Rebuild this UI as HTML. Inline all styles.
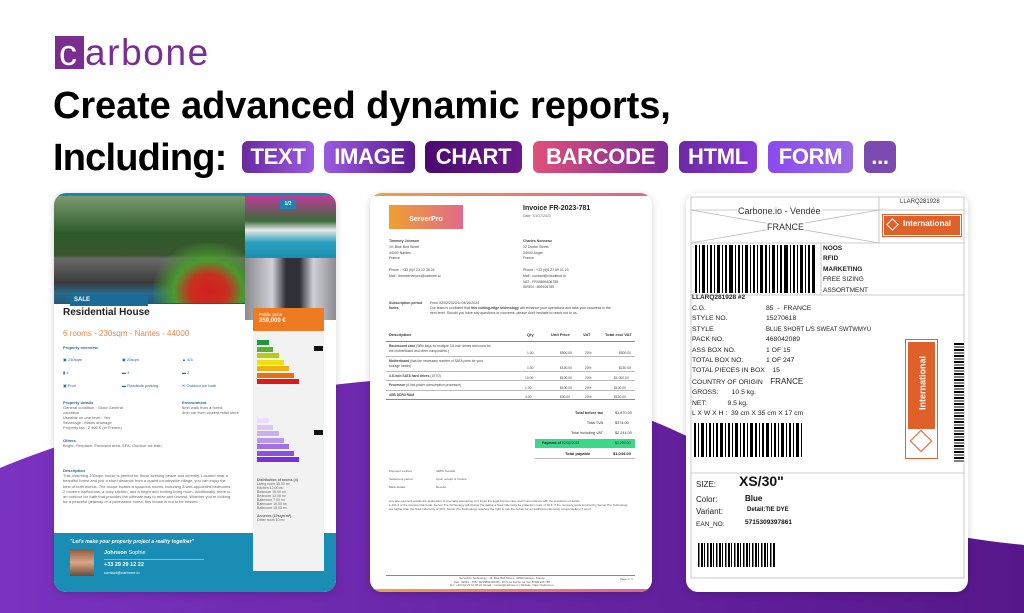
<!DOCTYPE html>
<html><head><meta charset="utf-8"><style>
*{margin:0;padding:0;box-sizing:border-box}
body{width:1024px;height:613px;overflow:hidden;background:#fff;font-family:"Liberation Sans",sans-serif;position:relative}
.a{position:absolute}
.badge{position:absolute;top:141px;height:32px;border-radius:6px;color:#fff;font-weight:bold;font-size:22px;line-height:32px;text-align:center;letter-spacing:-0.3px}
.card{position:absolute;top:193px;width:282px;height:399px;border-radius:12px;background:#fff;overflow:hidden;box-shadow:0 2px 8px rgba(0,0,0,.18)}
.t{position:absolute;white-space:nowrap;color:#333}
.ln{position:absolute;background:#bbb;height:1px}
</style></head><body>
<svg class="a" style="left:0;top:0" width="1024" height="613">
<defs><linearGradient id="pg" x1="0" x2="1" y1="0" y2="0"><stop offset="0" stop-color="#7a32c0"/><stop offset="1" stop-color="#56178a"/></linearGradient></defs>
<path d="M0,468 C90,430 230,395 360,382 C460,372 560,385 650,420 C740,455 820,525 1024,545 L1024,613 L0,613Z" fill="url(#pg)"/>
</svg>
<!-- logo -->
<div class="a" style="left:55px;top:36px;width:29px;height:33px;background:#7b2d90"></div>
<div class="a" style="left:59px;top:33px;font-size:36px;color:#fff;line-height:40px">c</div>
<div class="a" style="left:85px;top:33px;font-size:37px;color:#7b2d90;line-height:40px;letter-spacing:1.6px">arbone</div>
<div class="a" style="left:53px;top:84px;font-size:38px;font-weight:bold;letter-spacing:-0.1px;color:#000;line-height:44px">Create advanced dynamic reports,</div>
<div class="a" style="left:53px;top:136px;font-size:38px;font-weight:bold;letter-spacing:-0.8px;color:#000;line-height:44px">Including:</div>
<div class="badge" style="left:242px;width:72px;background:linear-gradient(90deg,#6a2aa0,#9b5ae0)">TEXT</div>
<div class="badge" style="left:324px;width:91px;background:linear-gradient(90deg,#9a5ae0,#5a1a90)">IMAGE</div>
<div class="badge" style="left:425px;width:97px;background:linear-gradient(90deg,#4a0a70,#6a1a8a)">CHART</div>
<div class="badge" style="left:533px;width:135px;background:linear-gradient(90deg,#e0507a,#7a2a9a)">BARCODE</div>
<div class="badge" style="left:679px;width:78px;background:linear-gradient(90deg,#6a2aa0,#8a3ad8)">HTML</div>
<div class="badge" style="left:768px;width:85px;background:linear-gradient(90deg,#8a4af0,#9b6ae0)">FORM</div>
<div class="badge" style="left:864px;width:32px;background:#7a4ab0">...</div>

<!-- card 1 -->
<div class="card" style="left:54px">
 <div class="a" style="left:0;top:0;width:282px;height:3px;background:#1a86b0"></div>
 <div class="a" style="left:0;top:3px;width:191px;height:108px;background:linear-gradient(180deg,#7a9a70 0%,#2e5a2a 35%,#3a5530 55%,#6a6a6a 58%,#3a3a3a 80%,#2a6a8a 90%,#1f5a7a 100%)"></div>
 <div class="a" style="left:100px;top:50px;width:91px;height:60px;background:radial-gradient(ellipse at 60% 80%,#d02020 0,#c83020 25%,#4a9a30 45%,rgba(60,140,40,0) 75%)"></div>
 <div class="a" style="left:191px;top:3px;width:91px;height:62px;background:linear-gradient(180deg,#c03a9a 0,#3a6a3a 40%,#e8e8e8 55%,#2aa0c0 75%,#1a90b0 100%)"></div>
 <div class="a" style="left:191px;top:65px;width:91px;height:62px;background:linear-gradient(90deg,#8a8a90,#d0d0d8 30%,#303038 45%,#303038 60%,#d0d0d8 75%,#8a8a90)"></div>
 <div class="a" style="left:226px;top:6px;width:16px;height:10px;background:#1a86b0;color:#fff;font-size:5px;font-weight:bold;text-align:center;line-height:10px">1/2</div>
 <div class="a" style="left:16px;top:101px;width:78px;height:12px;background:#1a6a9a;color:#fff;font-size:6px;font-weight:bold;line-height:12px;padding-left:4px">SALE</div>
 <div class="a" style="left:0;top:113px;width:157px;height:15px;background:#fff"></div>
 <div class="t" style="left:9px;top:114px;font-size:10px;font-weight:bold;color:#222">Residential House</div>
 <div class="t" style="left:9px;top:136px;font-size:8px;color:#e8884a">6 rooms - 230sqm - Nantes - 44000</div>
 <div class="t" style="left:9px;top:152px;font-size:4px;color:#1a6a9a;font-weight:bold">Property overview</div>
 <div class="t" style="left:9px;top:160px;font-size:4px;line-height:13px;color:#1a6a9a">▣ 230sqm<br>▮ 4<br>▣ Pool</div>
 <div class="t" style="left:68px;top:160px;font-size:4px;line-height:13px;color:#1a6a9a">▣ 20sqm<br>▬ 3<br>▬ Roadside parking</div>
 <div class="t" style="left:128px;top:160px;font-size:4px;line-height:13px;color:#1a6a9a">▲ 4/3<br>▬ 2<br>✕ Outdoor ice bath</div>
 <div class="t" style="left:9px;top:207px;font-size:4px;line-height:5px;color:#666"><b style="color:#1a6a9a">Property details</b><br>General condition : Good General<br>condition<br>Useable on one level : Yes<br>Sewerage : Mains drainage<br>Property tax : 2 500 € (in French)</div>
 <div class="t" style="left:128px;top:207px;font-size:4px;line-height:5px;color:#666"><b style="color:#1a6a9a">Environment</b><br>5mn walk from a forest<br>5mn car from closest retail store</div>
 <div class="t" style="left:9px;top:245px;font-size:4px;line-height:5px;color:#666"><b style="color:#1a6a9a">Others</b><br>Bright, Fireplace, Enclosed area, SPA, Outdoor ice bath</div>
 <div class="t" style="left:9px;top:275px;font-size:4px;line-height:5.2px;color:#666;white-space:normal;width:170px"><b style="color:#1a6a9a">Description</b><br>This charming 230sqm house is perfect for those seeking peace and serenity. Located near a beautiful forest and just a short distance from a quaint countryside village, you can enjoy the best of both worlds. The house boasts a spacious rooms, including 3 well-appointed bedrooms, 2 modern bathrooms, a cozy kitchen, and a bright and inviting living room. Additionally, there is an outdoor ice bath that provides the ultimate way to relax and unwind. Whether you're looking for a peaceful getaway or a permanent home, this house is not to be missed.</div>
 <div class="a" style="left:0;top:340px;width:282px;height:59px;background:#1a8db5"></div>
 <div class="t" style="left:16px;top:346px;font-size:5px;color:#fff;font-style:italic;font-weight:bold">"Let's make your property project a reality together"</div>
 <div class="a" style="left:16px;top:356px;width:24px;height:27px;background:linear-gradient(180deg,#8a5a3a,#d8a888 50%,#6a4a3a)"></div>
 <div class="t" style="left:50px;top:357px;font-size:5.5px;color:#fff"><b>Johnson</b> Sophie</div>
 <div class="a" style="left:50px;top:366px;width:100px;height:1px;background:#9ad"></div>
 <div class="t" style="left:50px;top:369px;font-size:5.5px;color:#fff;font-weight:bold">+33 29 29 12 22</div>
 <div class="t" style="left:50px;top:377px;font-size:4px;color:#fff">contact@carbone.io</div>
 <div class="a" style="left:199px;top:115px;width:71px;height:23px;background:#ee7a22;color:#fff;font-size:4.5px;padding:4px 6px;line-height:6px">Public price<br><b style="font-size:6px">359,000 €</b></div>
 <div class="a" style="left:199px;top:138px;width:71px;height:240px;background:#f2f2f2"></div>
 <div class="a" style="left:203px;top:147px">
  <div style="width:12px;height:5px;background:#1a9a3a;margin-bottom:1.5px"></div>
  <div style="width:16px;height:5px;background:#5ab030;margin-bottom:1.5px"></div>
  <div style="width:22px;height:5px;background:#b8cc10;margin-bottom:1.5px"></div>
  <div style="width:27px;height:5px;background:#f0e010;margin-bottom:1.5px"></div>
  <div style="width:32px;height:5px;background:#f0b010;margin-bottom:1.5px"></div>
  <div style="width:37px;height:5px;background:#e87010;margin-bottom:1.5px"></div>
  <div style="width:42px;height:5px;background:#e01818"></div>
 </div>
 <div class="a" style="left:260px;top:153px;width:9px;height:5px;background:#111"></div>
 <div class="a" style="left:203px;top:225px">
  <div style="width:12px;height:5px;background:#ece0f8;margin-bottom:1.5px"></div>
  <div style="width:16px;height:5px;background:#dcc8f4;margin-bottom:1.5px"></div>
  <div style="width:22px;height:5px;background:#cab0f0;margin-bottom:1.5px"></div>
  <div style="width:27px;height:5px;background:#b898ec;margin-bottom:1.5px"></div>
  <div style="width:32px;height:5px;background:#a070e8;margin-bottom:1.5px"></div>
  <div style="width:37px;height:5px;background:#8a50e0;margin-bottom:1.5px"></div>
  <div style="width:42px;height:5px;background:#7a30d8"></div>
 </div>
 <div class="a" style="left:260px;top:237px;width:9px;height:5px;background:#111"></div>
 <div class="t" style="left:203px;top:285px;font-size:3.5px;line-height:4px;color:#666"><b>Distribution of rooms (4)</b><br>Living room 38.00 m²<br>Kitchen 12.00 m²<br>Bedroom 15.00 m²<br>Bedroom 12.00 m²<br>Bathroom 7.00 m²<br>Bathroom 10.00 m²<br>Bathroom 15.00 m²<br><br><b>Annexes (10sqm m²)</b><br>Other room 10 m²</div>
</div>

<!-- card 2 -->
<div class="card" style="left:370px">
 <div class="a" style="left:0;top:0;width:282px;height:3px;background:linear-gradient(90deg,#f0a040,#e06090)"></div>
 <div class="a" style="left:0;top:396px;width:282px;height:3px;background:linear-gradient(90deg,#f0a040,#e06090)"></div>
 <div class="a" style="left:19px;top:12px;width:74px;height:24px;background:linear-gradient(90deg,#f0a030,#e06a8a);color:#fff;font-weight:bold;font-size:7px;text-align:center;padding-top:11px">ServerPro</div>
 <div class="t" style="left:153px;top:12px;font-size:7px;font-weight:bold;color:#222">Invoice FR-2023-781</div>
 <div class="t" style="left:153px;top:21px;font-size:3.5px;color:#666">Date : 01/17/2023</div>
 <div class="t" style="left:19px;top:46px;font-size:3.5px;line-height:5.8px;color:#444"><b>Timmoty Johnson</b><br>19, Blue Bird Street<br>44000 Nantes<br>France<br><br>Phone : +33 (0)2 23 12 38 24<br>Mail : timmserverpro@carbone.io</div>
 <div class="t" style="left:153px;top:46px;font-size:3.5px;line-height:5.8px;color:#444"><b>Charles Nonneau</b><br>12 Doctor Street<br>34930 Anger<br>France<br><br>Phone : +33 (0)6 27 89 01 23<br>Mail : contact@cloudtech.io<br>VAT : FR45899106785<br>SIREN : 899106785</div>
 <div class="t" style="left:19px;top:108px;font-size:3.5px;line-height:5px;color:#444"><b>Subscription period<br>Notes</b></div>
 <div class="t" style="left:60px;top:108px;font-size:3.5px;line-height:5px;color:#444">From 02/02/2023 to 04/16/2024<br>Our team is confident that <b>this cutting-edge technology</b> will enhance your operations and take your business to the<br>next level. Should you have any questions or concerns, please don't hesitate to reach out to us.</div>
 <div class="t" style="left:19px;top:139px;font-size:4px;font-weight:bold;color:#333">Description</div>
 <div class="t" style="left:157px;top:139px;font-size:4px;font-weight:bold;color:#333">Qty</div>
 <div class="t" style="left:181px;top:139px;font-size:4px;font-weight:bold;color:#333">Unit Price</div>
 <div class="t" style="left:213px;top:139px;font-size:4px;font-weight:bold;color:#333">VAT</div>
 <div class="t" style="left:235px;top:139px;font-size:4px;font-weight:bold;color:#333">Total excl VAT</div>
 <div class="ln" style="left:16px;top:148px;width:249px;background:#888"></div>
 <div class="ln" style="left:16px;top:163px;width:249px"></div>
 <div class="ln" style="left:16px;top:178px;width:249px"></div>
 <div class="ln" style="left:16px;top:187px;width:249px"></div>
 <div class="ln" style="left:16px;top:197px;width:249px"></div>
 <div class="ln" style="left:16px;top:206px;width:249px;background:#888"></div>
 <div class="t" style="left:19px;top:151px;font-size:3.3px;line-height:4.8px;color:#444"><b>Rackmount case</b> (With bays for multiple 3.5-inch drives and room for<br>the motherboard and other components.)</div>
 <div class="t" style="left:19px;top:166px;font-size:3.3px;line-height:4.8px;color:#444"><b>Motherboard</b> (has the necessary number of SATA ports for your<br>storage needs)</div>
 <div class="t" style="left:19px;top:181px;font-size:3.3px;color:#444"><b>3.5-inch SATA hard drives</b> (10TO)</div>
 <div class="t" style="left:19px;top:190px;font-size:3.3px;color:#444"><b>Processor</b> (A low-power consumption processor)</div>
 <div class="t" style="left:19px;top:200px;font-size:3.3px;color:#444"><b>4GB DDR3 RAM</b></div>
 <div class="t" style="left:157px;top:153px;font-size:3.3px;line-height:15px;color:#444">1.00<br>1.00</div>
 <div class="t" style="left:190px;top:153px;font-size:3.3px;line-height:15px;color:#444">$500.00<br>$150.00</div>
 <div class="t" style="left:215px;top:153px;font-size:3.3px;line-height:15px;color:#444">20%<br>20%</div>
 <div class="t" style="left:249px;top:153px;font-size:3.3px;line-height:15px;color:#444">$500.00<br>$150.00</div>
 <div class="t" style="left:155px;top:181px;font-size:3.3px;line-height:9.5px;color:#444">10.00<br>1.00<br>4.00</div>
 <div class="t" style="left:190px;top:181px;font-size:3.3px;line-height:9.5px;color:#444">$100.00<br>$100.00<br>$30.00</div>
 <div class="t" style="left:215px;top:181px;font-size:3.3px;line-height:9.5px;color:#444">20%<br>20%<br>20%</div>
 <div class="t" style="left:244px;top:181px;font-size:3.3px;line-height:9.5px;color:#444">$1,000.00<br>$100.00<br>$120.00</div>
 <div class="t" style="left:190px;top:215px;font-size:3.8px;line-height:10px;color:#333;text-align:right;width:43px">
  <b>Total before tax</b><br>Total TVA<br>Total including VAT</div>
 <div class="t" style="left:245px;top:215px;font-size:3.8px;line-height:10px;color:#333">$1,870.00<br>$374.00<br>$2,244.00</div>
 <div class="a" style="left:165px;top:246px;width:100px;height:9px;background:#3ad88a"></div>
 <div class="t" style="left:172px;top:248px;font-size:3.5px;color:#222"><b>Payment of</b> 02/02/2023</div>
 <div class="t" style="left:245px;top:248px;font-size:3.5px;color:#222">$1,200.00</div>
 <div class="t" style="left:195px;top:258px;font-size:4px;color:#222;font-weight:bold">Total payable</div>
 <div class="t" style="left:243px;top:258px;font-size:4px;color:#222;font-weight:bold">$1,044.00</div>
 <div class="ln" style="left:165px;top:265px;width:100px"></div>
 <div class="t" style="left:19px;top:274px;font-size:3px;line-height:8px;color:#555">Payment method<br>Settlement period<br>Bank details</div>
 <div class="t" style="left:66px;top:274px;font-size:3px;line-height:8px;color:#555">SEPA Transfer<br>Upon receipt of invoice<br>Revolut</div>
 <div class="t" style="left:19px;top:306px;font-size:3px;line-height:4px;color:#555">Any late payment entails the application of a penalty amounting to 3 times the legal interest rate, and in accordance with the provisions of article<br>L.441-6 of the Commercial Code, Server Pro Technology will charge the debtor a fixed indemnity for collection costs of 40 €. If the recovery costs incurred by Server Pro Technology<br>are higher than the fixed indemnity of 40 €, Server Pro Technology reserves the right to ask the debtor for an additional indemnity compensation of proof.</div>
 <div class="ln" style="left:16px;top:382px;width:249px;background:#888"></div>
 <div class="t" style="left:80px;top:384px;font-size:2.8px;line-height:3.6px;color:#555;text-align:center">ServerPro Technology - 19, Blue Bird Street - 44000 Nantes - France<br>Stat : 62012 - TVA : FR45899106785 - RCS La Roche sur Yon B 899 106 785<br>Tel : +33 (0)2 23 12 38 24 | Email : contact@carbone.io | Website: https://carbone.io</div>
 <div class="t" style="left:250px;top:384px;font-size:2.8px;color:#555">Page 1 / 1</div>
</div>

<!-- card 3 -->
<div class="card" style="left:686px">
 <svg class="a" style="left:0;top:0" width="282" height="399">
  <g stroke="#bbb" stroke-width="0.8" fill="none">
   <rect x="5" y="4" width="273" height="381"/>
   <line x1="5" y1="17" x2="278" y2="17"/>
   <line x1="193" y1="4" x2="193" y2="50"/>
   <line x1="5" y1="50" x2="278" y2="50"/>
   <line x1="5" y1="17" x2="193" y2="50"/>
   <line x1="193" y1="17" x2="5" y2="50"/>
   <line x1="135" y1="50" x2="135" y2="102"/>
   <line x1="5" y1="102" x2="278" y2="102"/>
   <line x1="5" y1="280" x2="278" y2="280"/>
  </g>
 </svg>
 <div class="t" style="left:51px;top:13px;font-size:9px;color:#333;background:#fff;padding:0 1px">Carbone.io - Vendée</div>
 <div class="t" style="left:80px;top:29px;font-size:9px;color:#333;background:#fff;padding:0 1px">FRANCE</div>
 <div class="t" style="left:214px;top:6px;font-size:6px;color:#333">LLARQ281928</div>
 <div class="a" style="left:196px;top:21px;width:80px;height:23px;border:1px solid #e06030;padding:1px"><div style="background:#e0602a;width:100%;height:100%;color:#fff;font-size:8px;font-weight:bold;padding-left:19px;line-height:15px">International</div></div>
 <div class="a" style="left:202px;top:27px;width:9px;height:9px;border:1px solid #fff;transform:rotate(45deg)"></div>
 <svg class="a" style="left:8px;top:52px" width="124" height="48">
  <g fill="#000">
  <rect x="1" width="2" height="48"/><rect x="5" width="1" height="48"/><rect x="8" width="3" height="48"/><rect x="13" width="1" height="48"/><rect x="16" width="2" height="48"/><rect x="20" width="1" height="48"/><rect x="23" width="3" height="48"/><rect x="28" width="1" height="48"/><rect x="31" width="2" height="48"/><rect x="35" width="4" height="48"/><rect x="41" width="1" height="48"/><rect x="44" width="2" height="48"/><rect x="48" width="1" height="48"/><rect x="51" width="3" height="48"/><rect x="56" width="1" height="48"/><rect x="59" width="2" height="48"/><rect x="63" width="1" height="48"/><rect x="66" width="3" height="48"/><rect x="71" width="2" height="48"/><rect x="75" width="1" height="48"/><rect x="78" width="3" height="48"/><rect x="83" width="1" height="48"/><rect x="86" width="2" height="48"/><rect x="90" width="4" height="48"/><rect x="96" width="1" height="48"/><rect x="99" width="2" height="48"/><rect x="103" width="1" height="48"/><rect x="106" width="3" height="48"/><rect x="111" width="1" height="48"/><rect x="114" width="2" height="48"/><rect x="118" width="3" height="48"/>
  </g>
 </svg>
 <div class="t" style="left:137px;top:51px;font-size:6.5px;line-height:10.4px;color:#222"><b>NOOS<br>RFID<br>MARKETING</b><br>FREE SIZING<br>ASSORTMENT</div>
 <div class="t" style="left:6px;top:101px;font-size:6.5px;font-weight:bold;color:#222">LLARQ281928 #2</div>
 <div class="t" style="left:6px;top:111px;font-size:6.8px;line-height:10.4px;color:#222">C.G.<br>STYLE NO.<br>STYLE<br>PACK NO.<br>ASS BOX NO.<br>TOTAL BOX NO:<br>TOTAL PIECES IN BOX &nbsp;&nbsp; 15<br>COUNTRY OF ORIGIN &nbsp;&nbsp; <span style="font-size:8px">FRANCE</span><br>GROSS: &nbsp;&nbsp;&nbsp;&nbsp;&nbsp; 10.5 kg.<br>NET: &nbsp;&nbsp;&nbsp;&nbsp;&nbsp;&nbsp;&nbsp;&nbsp;&nbsp; 9.5 kg.<br>L X W X H : &nbsp;39 cm X 35 cm X 17 cm</div>
 <div class="t" style="left:80px;top:111px;font-size:6.8px;line-height:10.4px;color:#222">85 &nbsp;- &nbsp;FRANCE<br>15270618<br><span style="font-size:6px">BLUE SHORT L/S SWEAT SWTWMYU</span><br>468042089<br>1 OF 15<br>1 OF 247</div>
 <svg class="a" style="left:8px;top:230px" width="120" height="34">
  <g fill="#000">
  <rect x="0" width="2" height="34"/><rect x="4" width="1" height="34"/><rect x="7" width="3" height="34"/><rect x="12" width="1" height="34"/><rect x="15" width="2" height="34"/><rect x="19" width="1" height="34"/><rect x="22" width="2" height="34"/><rect x="26" width="3" height="34"/><rect x="31" width="1" height="34"/><rect x="34" width="2" height="34"/><rect x="38" width="1" height="34"/><rect x="41" width="3" height="34"/><rect x="46" width="1" height="34"/><rect x="49" width="2" height="34"/><rect x="53" width="1" height="34"/><rect x="56" width="3" height="34"/><rect x="61" width="2" height="34"/><rect x="65" width="1" height="34"/><rect x="68" width="2" height="34"/><rect x="72" width="3" height="34"/><rect x="77" width="1" height="34"/><rect x="80" width="2" height="34"/><rect x="84" width="1" height="34"/><rect x="87" width="3" height="34"/><rect x="92" width="1" height="34"/><rect x="95" width="2" height="34"/><rect x="99" width="1" height="34"/><rect x="102" width="3" height="34"/><rect x="107" width="1" height="34"/>
  </g>
 </svg>
 <div class="a" style="left:219px;top:146px;width:33px;height:120px;border:1px solid #e06030;padding:2px"><div style="background:#e0602a;width:100%;height:87px;position:relative"><div style="position:absolute;left:-28px;top:36px;width:85px;transform:rotate(-90deg);color:#fff;font-size:9px;font-weight:bold;text-align:center">International</div></div></div>
 <div class="a" style="left:227px;top:240px;width:16px;height:16px;border:1px solid #e06030;transform:rotate(45deg)"></div>
 <div class="a" style="left:268px;top:150px;width:10px;height:120px;background:repeating-linear-gradient(180deg,#000 0,#000 2px,#fff 2px,#fff 3.5px,#000 3.5px,#000 4.5px,#fff 4.5px,#fff 6px)"></div>
 <div class="t" style="left:10px;top:287px;font-size:8px;color:#222">SIZE:</div>
 <div class="t" style="left:53px;top:280px;font-size:14px;font-weight:bold;color:#111">XS/30"</div>
 <div class="t" style="left:10px;top:301px;font-size:8px;line-height:12px;color:#222">Color:<br>Variant:<br><span style="font-size:6.5px">EAN_NO:</span></div>
 <div class="t" style="left:59px;top:301px;font-size:8px;font-weight:bold;color:#111">Blue</div>
 <div class="t" style="left:61px;top:314px;font-size:6px;font-weight:bold;color:#111">Detail:TIE DYE</div>
 <div class="t" style="left:59px;top:326px;font-size:6.5px;font-weight:bold;color:#111">5715309397861</div>
 <div class="a" style="left:12px;top:350px;width:78px;height:24px;background:repeating-linear-gradient(90deg,#000 0,#000 1.5px,#fff 1.5px,#fff 3px,#000 3px,#000 5px,#fff 5px,#fff 6px,#000 6px,#000 7px,#fff 7px,#fff 9px)"></div>
</div>
</body></html>
